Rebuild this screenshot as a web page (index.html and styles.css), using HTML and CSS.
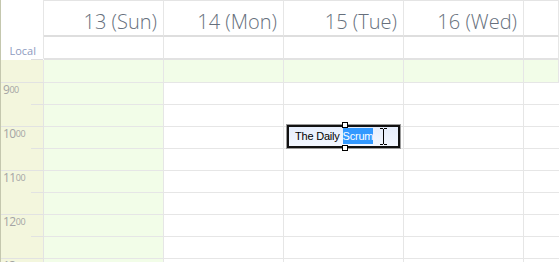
FILE: index.html
```html
<!DOCTYPE html>
<html lang="en">
<head>
  <meta charset="UTF-8">
  <title>Calendar week view</title>
  <link rel="stylesheet" href="styles.css">
</head>
<body>
  <div class="cal">
    <div class="row head">
      <div class="corner"></div>
      <div class="day">13 (Sun)</div>
      <div class="day">14 (Mon)</div>
      <div class="day">15 (Tue)</div>
      <div class="day">16 (Wed)</div>
      <div class="day"></div>
    </div>

    <div class="row sub">
      <div class="corner zone">Local</div>
      <div class="cell"></div>
      <div class="cell"></div>
      <div class="cell"></div>
      <div class="cell"></div>
      <div class="cell"></div>
    </div>

    <div class="row allday">
      <div class="corner"></div>
      <div class="cell"></div>
      <div class="cell"></div>
      <div class="cell"></div>
      <div class="cell"></div>
      <div class="cell"></div>
    </div>

    <div class="row grid">
      <div class="times">
        <div class="hour"><span>9</span><sup>00</sup></div>
        <div class="hour"><span>10</span><sup>00</sup></div>
        <div class="hour"><span>11</span><sup>00</sup></div>
        <div class="hour"><span>12</span><sup>00</sup></div>
        <div class="hour"><span>13</span><sup>00</sup></div>
      </div>
      <div class="col weekend">
        <div class="slot"></div><div class="slot"></div><div class="slot"></div><div class="slot"></div><div class="slot"></div>
        <div class="slot"></div><div class="slot"></div><div class="slot"></div><div class="slot"></div><div class="slot"></div>
      </div>
      <div class="col">
        <div class="slot"></div><div class="slot"></div><div class="slot"></div><div class="slot"></div><div class="slot"></div>
        <div class="slot"></div><div class="slot"></div><div class="slot"></div><div class="slot"></div><div class="slot"></div>
      </div>
      <div class="col">
        <div class="slot"></div><div class="slot"></div><div class="slot"></div><div class="slot"></div><div class="slot"></div>
        <div class="slot"></div><div class="slot"></div><div class="slot"></div><div class="slot"></div><div class="slot"></div>
        <div class="editor">
          <span class="handle top"></span>
          <span class="text">The Daily <span class="sel">Scrum</span></span>
          <svg class="ibeam" width="9" height="17" viewBox="0 0 9 17">
            <path d="M1 0.5h3M5 0.5h3M4.5 1v15M1 16.5h3M5 16.5h3" stroke="#000" stroke-width="1" fill="none"/>
          </svg>
          <span class="handle bottom"></span>
        </div>
      </div>
      <div class="col">
        <div class="slot"></div><div class="slot"></div><div class="slot"></div><div class="slot"></div><div class="slot"></div>
        <div class="slot"></div><div class="slot"></div><div class="slot"></div><div class="slot"></div><div class="slot"></div>
      </div>
      <div class="col last">
        <div class="slot"></div><div class="slot"></div><div class="slot"></div><div class="slot"></div><div class="slot"></div>
        <div class="slot"></div><div class="slot"></div><div class="slot"></div><div class="slot"></div><div class="slot"></div>
      </div>
    </div>
  </div>
</body>
</html>
```

FILE: styles.css
```css
body {
  margin: 0;
  font-family: "Open Sans", "Liberation Sans", sans-serif;
  background: #fff;
  overflow: hidden;
}
.cal {
  width: 559px;
  height: 262px;
  overflow: hidden;
  border-left: 1px solid #c4c7ae;
  box-sizing: border-box;
}
.row {
  display: grid;
  grid-template-columns: 43px repeat(4, 120px) 1fr;
}
.corner {
  border-right: 1px solid #e6e6e6;
}

/* header with the dates */
.head .day {
  height: 37px;
  box-sizing: border-box;
  border-top: 1px solid #e4e4e4;
  border-right: 1px solid #e6e6e6;
  border-bottom: 2px solid #dedede;
  text-align: right;
  padding: 11px 6px 0 0;
  font-size: 20px;
  font-weight: 300;
  line-height: 20px;
  color: #666f7c;
}

.sub .cell {
  height: 21px;
  border-right: 1px solid #e6e6e6;
  border-bottom: 2px solid #e2e2e2;
}
.zone {
  font-size: 11px;
  color: #8e9bbf;
  text-align: right;
  padding-right: 7px;
  line-height: 28px;
  height: 21px;
  border-bottom: 2px solid #fff;
  position: relative;
}
.zone::after {
  content: "";
  position: absolute;
  left: 30px;
  right: 0;
  bottom: -2px;
  height: 1px;
  background: #dedede;
}

.allday .corner {
  background: #f3f6dd;
  height: 22px;
}
.allday .cell {
  height: 22px;
  background: #f2fde8;
  border-right: 1px solid #e6e6e6;
}

/* time grid */
.times {
  background: #f3f6dd;
  border-right: 1px solid #e3e3e3;
}
.hour {
  height: 43px;
  border-top: 1px solid #e2e2e2;
  position: relative;
  color: #a4a4a4;
  padding-left: 2px;
  line-height: 10px;
}
.hour::after {
  content: "";
  position: absolute;
  left: 30px;
  right: 0;
  top: 21px;
  height: 1px;
  background: #e2e2e2;
}
.hour span {
  font-size: 12px;
  letter-spacing: -0.5px;
}
.hour sup {
  font-size: 9px;
  vertical-align: 1px;
  line-height: 0;
  letter-spacing: -0.5px;
}
.col {
  border-right: 1px solid #e6e6e6;
  position: relative;
}
.col.last {
  border-right: none;
}
.weekend {
  background: #f2fde8;
}
.slot {
  height: 21px;
  border-top: 1px solid #e6e6e6;
}

/* inline title editor */
.editor {
  position: absolute;
  left: 3px;
  top: 43px;
  width: 109px;
  height: 19px;
  border: 2px solid #111;
  box-shadow: 0 0 0 1px #9a9a9a;
  background: linear-gradient(#e6eefc, #f3f7ff);
  font-family: "Liberation Sans", Arial, sans-serif;
  font-size: 11px;
  line-height: 19px;
  letter-spacing: -0.2px;
  box-sizing: content-box;
}
.editor .text {
  padding-left: 6px;
  color: #000;
}
.editor .sel {
  background: #3399ff;
  color: #fff;
  padding: 2px 0;
}
.ibeam {
  position: absolute;
  left: 90px;
  top: 1px;
}
.handle {
  position: absolute;
  left: 53px;
  width: 4px;
  height: 4px;
  background: #fff;
  border: 1px solid #000;
}
.handle.top {
  top: -5px;
}
.handle.bottom {
  bottom: -5px;
}
```
